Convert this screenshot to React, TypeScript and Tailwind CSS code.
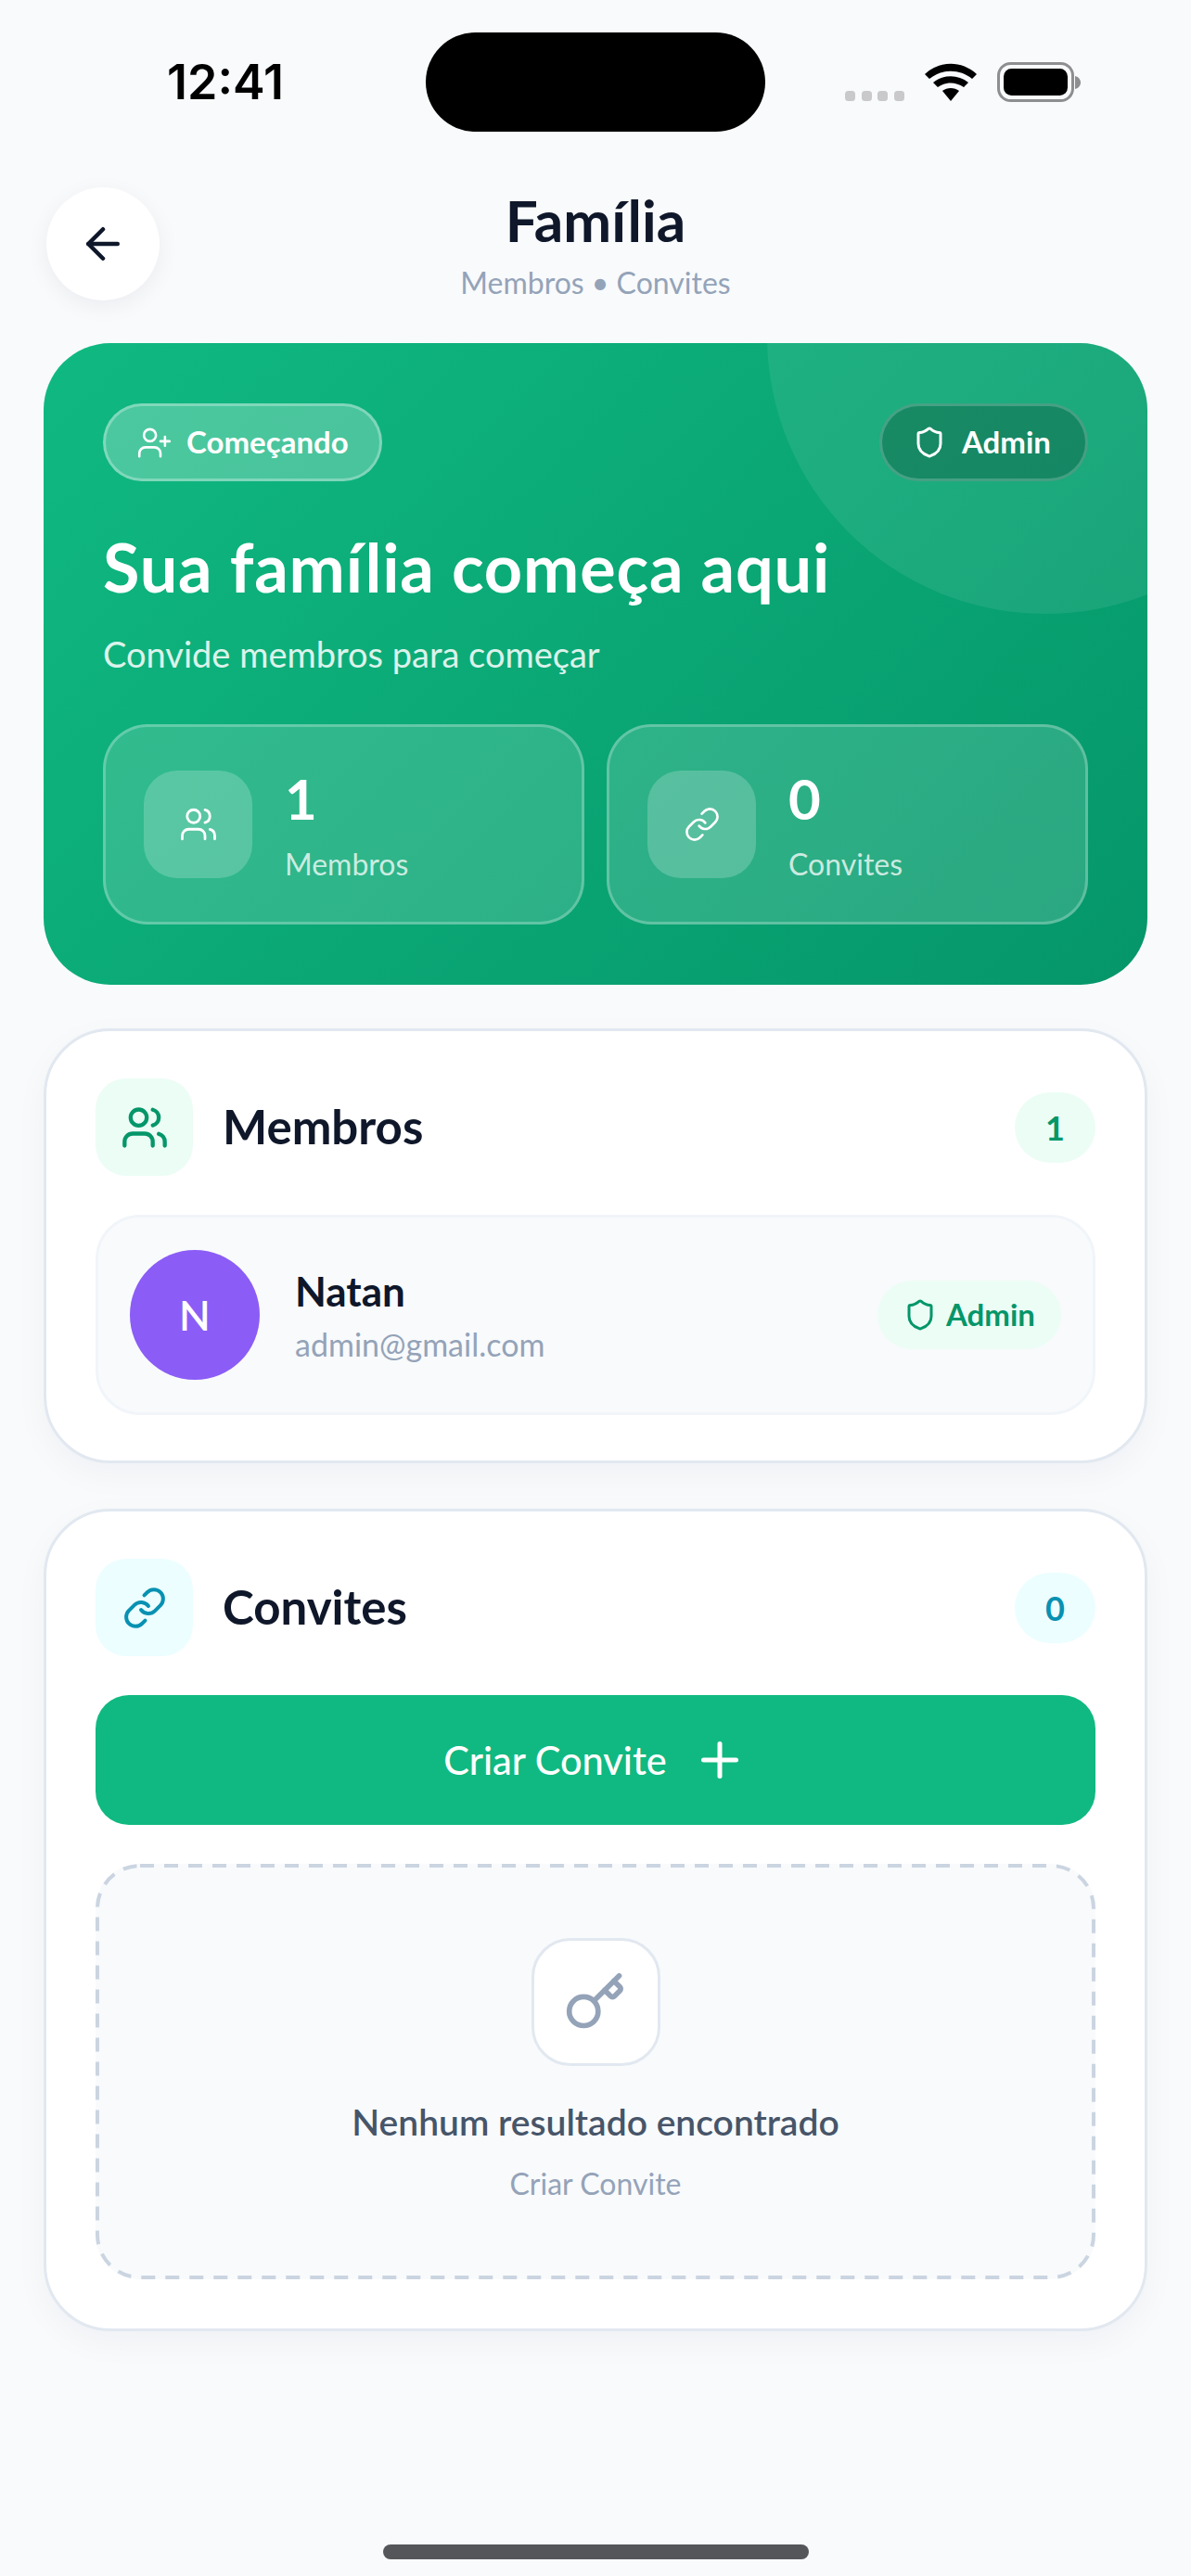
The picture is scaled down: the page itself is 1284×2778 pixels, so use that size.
import { ArrowLeft, Link, Plus, Shield, UserPlus, Users } from 'lucide-react'

function KeyIcon() {
  return (
    <svg width="68" height="68" viewBox="0 0 24 24" fill="none" stroke="#94a3b8" strokeWidth="2" strokeLinecap="round" strokeLinejoin="round">
      <path d="m15.5 7.5 2.3 2.3a1 1 0 0 0 1.4 0l2.1-2.1a1 1 0 0 0 0-1.4L19 4" />
      <path d="m21 2-9.6 9.6" />
      <circle cx="7.5" cy="15.5" r="5.5" />
    </svg>
  )
}

function StatusIcons() {
  return (
    <svg width="254" height="44" viewBox="0 0 254 44" className="block">
      <rect x="0" y="31" width="11" height="11" rx="3.5" fill="#c9c9cb" />
      <rect x="18" y="31" width="11" height="11" rx="3.5" fill="#c9c9cb" />
      <rect x="35" y="31" width="11" height="11" rx="3.5" fill="#c9c9cb" />
      <rect x="53" y="31" width="11" height="11" rx="3.5" fill="#c9c9cb" />
      <path d="M86 13 C102 -2 126 -2 142 13 L137 18 C124 7 104 7 91 18 Z" fill="#000" />
      <path d="M95 22 C106 13 122 13 133 22 L128 27 C119 21 109 21 100 27 Z" fill="#000" />
      <path d="M105 31 C110 27 118 27 123 31 L114 42 Z" fill="#000" />
      <rect x="165.5" y="1.5" width="80" height="40" rx="13" fill="none" stroke="#8e8e90" strokeWidth="3" />
      <rect x="171" y="7" width="69" height="29" rx="8.5" fill="#000" />
      <path d="M248 15 C252 16 254 19 254 22 C254 25 252 28 248 29 Z" fill="#8e8e90" />
    </svg>
  )
}

function StatCard({ icon, value, label }: { icon: React.ReactNode; value: string; label: string }) {
  return (
    <div className="flex h-[216px] flex-1 items-center gap-[35px] rounded-[48px] border-[3px] border-white/25 bg-white/15 pl-[41px]">
      <div className="flex h-[116px] w-[117px] items-center justify-center rounded-[36px] bg-white/20 text-white">{icon}</div>
      <div className="flex flex-col pt-[5px]">
        <span className="text-[60px] leading-[60px] font-bold text-white">{value}</span>
        <span className="mt-[21px] text-[32px] leading-[40px] text-white/75">{label}</span>
      </div>
    </div>
  )
}

export default function App() {
  return (
    <div className="relative min-h-[2778px] bg-[#f8fafc] font-['Lato','Noto_Sans',sans-serif]">
      {/* status bar */}
      <div className="flex items-center pt-[35px]">
        <div className="w-[459px] pl-[180px] font-['Inter',sans-serif] text-[52px] leading-[107px] font-semibold text-black">12:41</div>
        <div className="h-[107px] w-[366px] rounded-full bg-black" />
        <div className="pl-[86px]">
          <StatusIcons />
        </div>
      </div>

      <div className="px-[47px]">
        {/* header */}
        <div className="mt-[60px] grid h-[123px] grid-cols-[125px_1fr_125px]">
          <div className="ml-[3px] flex h-[122px] w-[122px] items-center justify-center rounded-full bg-white text-[#0f172a] shadow-[0_6px_24px_rgba(15,23,42,0.06)]">
            <ArrowLeft size={54} strokeWidth={2} />
          </div>
          <div className="flex flex-col items-center">
            <span className="text-[62px] leading-[70px] font-bold text-[#0f172a]">Família</span>
            <span className="mt-[13px] text-[32px] leading-[40px] text-[#94a3b8]">Membros • Convites</span>
          </div>
        </div>

        {/* hero */}
        <div className="relative mt-[45px] h-[692px] overflow-hidden rounded-[72px] bg-[linear-gradient(135deg,#10b981,#059669)] px-[64px] pt-[65px]">
          <div className="absolute top-[-308px] right-[-190px] h-[600px] w-[600px] rounded-full bg-white/8" />
          <div className="relative flex items-center justify-between">
            <div className="flex h-[84px] w-[301px] items-center gap-[15px] rounded-full border-[3px] border-white/30 bg-white/25 pl-[33px] text-white">
              <UserPlus size={39} strokeWidth={1.6} />
              <span className="text-[33px] font-bold">Começando</span>
            </div>
            <div className="flex h-[84px] w-[225px] items-center gap-[17px] rounded-full border-[3px] border-white/20 bg-black/20 pl-[33px] text-white">
              <Shield size={36} strokeWidth={2} />
              <span className="text-[33px] font-bold">Admin</span>
            </div>
          </div>
          <div className="relative mt-[50px] text-[72px] leading-[84px] font-bold tracking-[0.8px] text-white">Sua família começa aqui</div>
          <div className="relative mt-[30px] text-[38px] leading-[44px] text-white/85">Convide membros para começar</div>
          <div className="relative mt-[54px] flex gap-[24px]">
            <StatCard icon={<Users size={42} strokeWidth={1.6} />} value="1" label="Membros" />
            <StatCard icon={<Link size={40} strokeWidth={1.6} />} value="0" label="Convites" />
          </div>
        </div>

        {/* membros */}
        <div className="mt-[47px] h-[469px] rounded-[72px] border-[3px] border-[#e2e8f0] bg-white px-[53px] pt-[51px] shadow-[0_12px_36px_rgba(15,23,42,0.04)]">
          <div className="flex items-center">
            <div className="flex h-[105px] w-[105px] items-center justify-center rounded-[33px] bg-[#ecfdf5] text-[#059669]">
              <Users size={52} strokeWidth={2} />
            </div>
            <span className="ml-[32px] flex-1 text-[51px] font-bold text-[#0f172a]">Membros</span>
            <div className="flex h-[76px] w-[87px] items-center justify-center rounded-full bg-[#ecfdf5] text-[36px] font-bold text-[#059669]">1</div>
          </div>
          <div className="mt-[42px] flex h-[216px] items-center rounded-[48px] border-[3px] border-[#f1f5f9] bg-[#f8fafc] pr-[34px] pl-[34px]">
            <div className="flex h-[140px] w-[140px] items-center justify-center rounded-full bg-[#8b5cf6] text-[44px] font-semibold text-white">N</div>
            <div className="ml-[38px] flex flex-1 flex-col">
              <span className="text-[44px] leading-[50px] font-bold text-[#0f172a]">Natan</span>
              <span className="mt-[13px] text-[34px] leading-[40px] text-[#94a3b8]">admin@gmail.com</span>
            </div>
            <div className="flex h-[74px] w-[198px] items-center gap-[10px] rounded-full bg-[#ecfdf5] pl-[28px] text-[#059669]">
              <Shield size={36} strokeWidth={2} />
              <span className="text-[33px] font-bold">Admin</span>
            </div>
          </div>
        </div>

        {/* convites */}
        <div className="mt-[49px] h-[887px] rounded-[72px] border-[3px] border-[#e2e8f0] bg-white px-[53px] pt-[51px] shadow-[0_12px_36px_rgba(15,23,42,0.04)]">
          <div className="flex items-center">
            <div className="flex h-[105px] w-[105px] items-center justify-center rounded-[33px] bg-[#ecfeff] text-[#0891b2]">
              <Link size={48} strokeWidth={2} />
            </div>
            <span className="ml-[32px] flex-1 text-[51px] font-bold text-[#0f172a]">Convites</span>
            <div className="flex h-[76px] w-[87px] items-center justify-center rounded-full bg-[#ecfeff] text-[36px] font-bold text-[#0891b2]">0</div>
          </div>
          <div className="mt-[42px] flex h-[140px] items-center justify-center gap-[27px] rounded-[36px] bg-[#10b981] text-white">
            <span className="text-[41.5px] font-medium">Criar Convite</span>
            <Plus size={60} strokeWidth={2} />
          </div>
          <div className="relative mt-[42px] flex h-[448px] flex-col items-center rounded-[48px] bg-[#f8fafc] pt-[80px]">
            {/* iOS dash rhythm, CSS dashed is too short here */}
            <svg className="absolute inset-0 h-full w-full" fill="none">
              <rect x="2" y="2" width="1074" height="444" rx="46" stroke="#cbd5e1" strokeWidth="4" strokeDasharray="15 11" />
            </svg>
            <div className="relative flex h-[138px] w-[139px] items-center justify-center rounded-[42px] border-[3px] border-[#e2e8f0] bg-white">
              <KeyIcon />
            </div>
            <span className="relative mt-[36px] text-[39px] leading-[48px] font-semibold text-[#475569]">Nenhum resultado encontrado</span>
            <span className="relative mt-[23px] text-[32px] leading-[40px] text-[#94a3b8]">Criar Convite</span>
          </div>
        </div>
      </div>

      {/* home indicator */}
      <div className="absolute bottom-[18px] left-[413px] h-[16px] w-[459px] rounded-full bg-[#55565a]" />
    </div>
  )
}
